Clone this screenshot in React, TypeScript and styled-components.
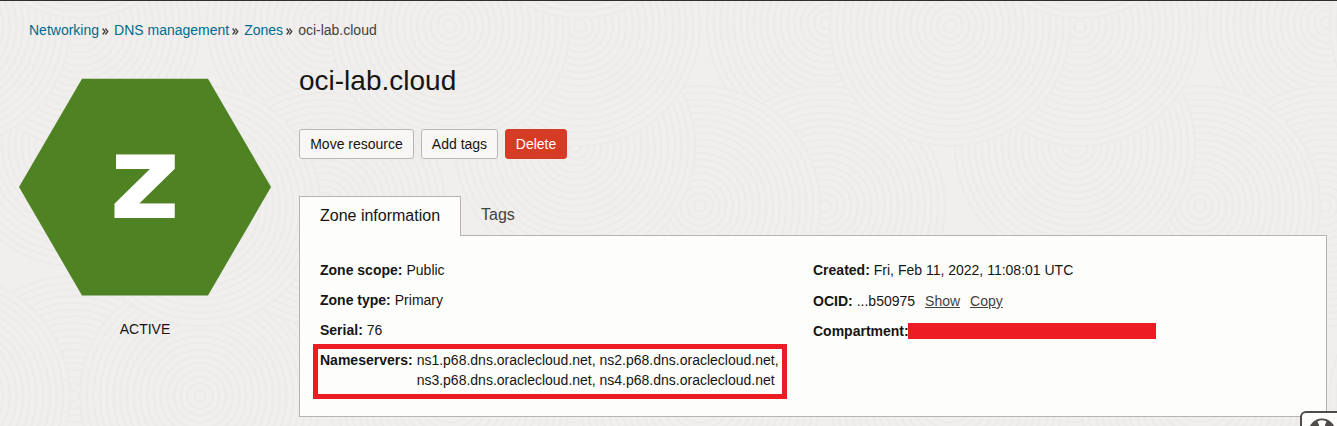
import React from "react";
import styled, { createGlobalStyle } from "styled-components";

const GlobalStyle = createGlobalStyle`
  * { box-sizing: border-box; }
  body {
    margin: 0;
    font-family: "Liberation Sans", Arial, sans-serif;
    font-size: 14px;
    line-height: 20px;
    color: #161513;
    background: #efeeec;
  }
`;

const Page = styled.main`
  position: relative;
  width: 1337px;
  height: 426px;
  overflow: hidden;
  border-top: 1px solid #312d2a;
  isolation: isolate;
`;

const Texture = styled.svg`
  position: absolute;
  inset: 0;
  z-index: -1;
`;

const Breadcrumb = styled.nav`
  display: flex;
  padding: 19px 0 0 29px;
  white-space: pre;
`;

const Crumb = styled.a`
  color: #006b8f;
`;

const Chevrons = styled.svg`
  margin: 8px 5px 0 3px;
`;

const Current = styled.span`
  color: #45413e;
`;

const Columns = styled.div`
  display: flex;
`;

const StatusColumn = styled.aside`
  flex: none;
  width: 299px;
  padding: 38px 0 0 19px;
`;

const Shape = styled.svg`
  display: block;
`;

const StatusLabel = styled.div`
  width: 252px;
  margin-top: 23px;
  text-align: center;
`;

const Details = styled.section`
  width: 1028px;
`;

const Title = styled.h1`
  margin: 23px 0 0;
  font-size: 28px;
  line-height: 36px;
  font-weight: 400;
`;

const Actions = styled.div`
  display: flex;
  gap: 7px;
  margin-top: 30px;
`;

const Button = styled.button<{ $danger?: boolean; $width: number }>`
  width: ${(p) => p.$width}px;
  height: 30px;
  padding: 0;
  font: inherit;
  color: ${(p) => (p.$danger ? "#fff" : "#161513")};
  background: ${(p) => (p.$danger ? "#d63b25" : "#f8f7f5")};
  border: 1px solid ${(p) => (p.$danger ? "#d63b25" : "#bcb6b1")};
  border-radius: 3px;
`;

const Tabs = styled.div`
  display: flex;
  margin-top: 37px;
`;

const Tab = styled.div<{ $active?: boolean }>`
  position: relative;
  height: 40px;
  margin-bottom: ${(p) => (p.$active ? "-1px" : "0")};
  padding: 9px 20px 0;
  font-size: 16px;
  color: ${(p) => (p.$active ? "#161513" : "#45413e")};
  background: ${(p) => (p.$active ? "#fdfdfb" : "transparent")};
  border: ${(p) => (p.$active ? "1px solid #b8b3ae" : "0")};
  border-bottom: 0;
`;

const Panel = styled.div`
  display: flex;
  height: 182px;
  margin-top: -1px;
  background: #fdfdfb;
  border: 1px solid #b8b3ae;
`;

const MainFields = styled.div`
  width: 493px;
  padding: 24px 0 0 13px;
`;

const SideFields = styled.div`
  padding: 24px 0 0 20px;
`;

const Field = styled.div<{ $inset?: number; $after?: number }>`
  display: flex;
  margin: 0 0 ${(p) => p.$after ?? 10}px ${(p) => p.$inset ?? 0}px;
  white-space: pre;
`;

const Label = styled.strong`
  font-weight: 700;
`;

const Value = styled.span`
  margin-left: 4px;
`;

const TextLink = styled.a`
  margin-left: 10px;
  color: #45413e;
  text-decoration: underline;
`;

const Highlight = styled.div`
  display: flex;
  width: 474px;
  height: 55px;
  margin-top: -6px;
  padding: 1px 0 0 2px;
  border: 5px solid #ed1c24;
  white-space: pre;
`;

const Redaction = styled.span`
  width: 248px;
  height: 16px;
  margin: 2px 0 0 -1px;
  background: #ed1c24;
`;

const HelpTab = styled.div`
  position: absolute;
  left: 1300px;
  top: 410px;
  width: 60px;
  height: 40px;
  padding: 5px 0 0 6px;
  background: #fdfdfb;
  border: 2px solid #4f4b49;
  border-radius: 6px;
`;

type Disc = { x: number; y: number };

const discs: Disc[] = [
  { x: 73, y: 395 },
  { x: 573, y: 395 },
  { x: 200, y: 395 },
  { x: 450, y: 395 },
  { x: -50, y: 395 },
  { x: 327, y: 22 },
  { x: 325, y: 205 },
  { x: 200, y: 205 },
  { x: 75, y: 145 },
  { x: 575, y: 145 },
  { x: 80, y: 25 },
  { x: 580, y: 25 },
  { x: 450, y: 25 },
  { x: -50, y: 25 },
  { x: 80, y: -103 },
  { x: 580, y: -103 },
];

const ringRadii = Array.from({ length: 18 }, (_, i) => 120 - i * 6.7);

const Rings = ({ x, y }: Disc) => (
  <g>
    {ringRadii.map((r, i) => (
      <circle key={i} cx={x} cy={y} r={r} fill={i === 0 ? "#f0efed" : "none"} stroke="#ecebe9" strokeWidth={2} />
    ))}
  </g>
);

const Background = () => (
  <Texture width="1337" height="426" aria-hidden="true">
    <defs>
      <pattern id="rings" width="500" height="500" patternUnits="userSpaceOnUse">
        <rect width="500" height="500" fill="#f0efed" />
        {discs.map((d, i) => (
          <Rings key={i} {...d} />
        ))}
      </pattern>
    </defs>
    <rect width="1337" height="426" fill="url(#rings)" />
  </Texture>
);

const Separator = () => (
  <Chevrons width="7" height="7" viewBox="0 0 7 7" fill="none" stroke="#45413e" strokeWidth="1.3">
    <path d="M.6.5 3 3.5.6 6.5M3.4.5l2.4 3-2.4 3" />
  </Chevrons>
);

const Hexagon = () => (
  <Shape width="252" height="218" viewBox="0 0 252 218" role="img" aria-label="Zone">
    <path d="M63 .8h126l63 108.300-63 108.300H63L0 109.100z" fill="#4f8223" />
    <text
      transform="translate(125.700 140) scale(1.07 1)"
      textAnchor="middle"
      fontFamily="DejaVu Sans, sans-serif"
      fontWeight="700"
      fontSize="115"
      fill="#fff"
    >
      z
    </text>
  </Shape>
);

const Lifebuoy = () => (
  <svg width="30" height="30" viewBox="0 0 30 30" fill="none">
    <circle cx="14" cy="14" r="9.500" stroke="#4f4b49" strokeWidth="8" />
    <path d="M9.500 3.500Q14 .8 18.500 3.500L16.500 8.500Q14 7.400 11.500 8.500z" fill="#fdfdfb" />
    <circle cx="14" cy="14" r="5.500" fill="#fdfdfb" />
  </svg>
);

export default function App() {
  return (
    <Page>
      <GlobalStyle />
      <Background />
      <Breadcrumb>
        <Crumb>Networking</Crumb>
        <Separator />
        <Crumb>DNS management</Crumb>
        <Separator />
        <Crumb>Zones</Crumb>
        <Separator />
        <Current>oci-lab.cloud</Current>
      </Breadcrumb>
      <Columns>
        <StatusColumn>
          <Hexagon />
          <StatusLabel>ACTIVE</StatusLabel>
        </StatusColumn>
        <Details>
          <Title>oci-lab.cloud</Title>
          <Actions>
            <Button $width={115}>Move resource</Button>
            <Button $width={77}>Add tags</Button>
            <Button $width={62} $danger>Delete</Button>
          </Actions>
          <Tabs>
            <Tab $active>Zone information</Tab>
            <Tab>Tags</Tab>
          </Tabs>
          <Panel>
            <MainFields>
              <Field $inset={7}><Label>Zone scope:</Label><Value>Public</Value></Field>
              <Field $inset={7}><Label>Zone type:</Label><Value>Primary</Value></Field>
              <Field $inset={7}><Label>Serial:</Label><Value>76</Value></Field>
              <Highlight>
                <Label>Nameservers:</Label>
                <Value>
                  ns1.p68.dns.oraclecloud.net, ns2.p68.dns.oraclecloud.net,{"\n"}
                  ns3.p68.dns.oraclecloud.net, ns4.p68.dns.oraclecloud.net
                </Value>
              </Highlight>
            </MainFields>
            <SideFields>
              <Field $after={11}><Label>Created:</Label><Value>Fri, Feb 11, 2022, 11:08:01 UTC</Value></Field>
              <Field>
                <Label>OCID:</Label><Value>...b50975</Value>
                <TextLink>Show</TextLink>
                <TextLink>Copy</TextLink>
              </Field>
              <Field><Label>Compartment:</Label><Redaction /></Field>
            </SideFields>
          </Panel>
        </Details>
      </Columns>
      <HelpTab><Lifebuoy /></HelpTab>
    </Page>
  );
}
